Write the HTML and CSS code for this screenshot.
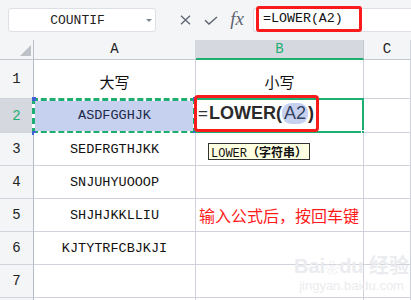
FILE: index.html
```html
<!DOCTYPE html>
<html lang="zh-CN">
    <head>
        <meta charset="UTF-8" />
        <meta name="viewport" content="width=device-width, initial-scale=1.0" />
        <title>LOWER</title>
        <link rel="stylesheet" href="styles.css">
    </head>
    <body>
        <!-- 편집줄 -->
        <div class="toolbar">
            <div class="namebox">
                <span class="nb_text">COUNTIF</span>
                <span class="caret"></span>
            </div>
            <div class="fx_icons">
                <span class="ic">
                    <svg width="11" height="10" viewBox="0 0 11 10">
                        <path d="M1 0.8L10 9.2M10 0.8L1 9.2" stroke="#5d6470" stroke-width="1.3" fill="none" />
                    </svg>
                </span>
                <span class="ic">
                    <svg width="14" height="9" viewBox="0 0 14 9">
                        <path d="M1 4.2L5 8L13 1" stroke="#5d6470" stroke-width="1.4" fill="none" />
                    </svg>
                </span>
                <span class="ic fx">fx</span>
            </div>
            <div class="formula">
                <span class="mark_bar">=LOWER(A2)</span>
            </div>
        </div>

        <!-- 시트 -->
        <div class="sheet">
            <div class="corner"><span class="tri"></span></div>
            <div class="colhead">A</div>
            <div class="colhead on">B</div>
            <div class="colhead">C</div>

            <div class="rowhead">1</div>
            <div class="cell cn">大写</div>
            <div class="cell cn">小写</div>
            <div class="cell"></div>

            <div class="rowhead on">2</div>
            <div class="cell ref">
                ASDFGGHJK
                <span class="ants"></span>
                <span class="dot d1"></span>
                <span class="dot d2"></span>
                <span class="dot d3"></span>
                <span class="dot d4"></span>
            </div>
            <div class="cell active">
                <span class="mark_cell">
                    <span class="eq">=</span><b>LOWER(</b><span class="arg">A2</span><b>)</b>
                </span>
                <span class="handle"></span>
            </div>
            <div class="cell"></div>

            <div class="rowhead">3</div>
            <div class="cell">SEDFRGTHJKK</div>
            <div class="cell tip_cell">
                <span class="tip">LOWER<b>（字符串）</b></span>
            </div>
            <div class="cell"></div>

            <div class="rowhead">4</div>
            <div class="cell">SNJUHYUOOOP</div>
            <div class="cell"></div>
            <div class="cell"></div>

            <div class="rowhead">5</div>
            <div class="cell">SHJHJKKLLIU</div>
            <div class="cell note">输入公式后，按回车键</div>
            <div class="cell"></div>

            <div class="rowhead">6</div>
            <div class="cell">KJTYTRFCBJKJI</div>
            <div class="cell"></div>
            <div class="cell"></div>

            <div class="rowhead">7</div>
            <div class="cell"></div>
            <div class="cell"></div>
            <div class="cell"></div>

            <!-- 8행은 아래 끝에 조금만 보임 -->
            <div class="rowhead"></div>
            <div class="cell"></div>
            <div class="cell"></div>
            <div class="cell"></div>

            <!-- 워터마크 -->
            <div class="wm">
                <div class="wm_logo">Bai<span class="paw">❀</span>du 经验</div>
                <div class="wm_url">jingyan.baidu.com</div>
            </div>
        </div>
    </body>
</html>
```

FILE: styles.css
```css
* {
    margin: 0px;
    padding: 0px;
    box-sizing: border-box;
}

body {
    width: 411px;
    height: 300px;
    overflow: hidden;
    background-color: #f4f5f7;
    font-family: "Liberation Mono", "Noto Sans CJK SC", monospace;
    color: #111;
}

/* 편집줄 */
.toolbar {
    height: 40px;
    display: flex;
    align-items: center;
    padding-left: 8px;
}

.namebox {
    width: 148px;
    height: 24px;
    background-color: #fff;
    border: 1px solid #dcdfe5;
    border-radius: 3px;
    display: flex;
    align-items: center;
}
.nb_text {
    flex: 1;
    text-align: center;
    font-size: 13px;
    color: #222;
}
.caret {
    width: 0;
    height: 0;
    border-left: 3px solid transparent;
    border-right: 3px solid transparent;
    border-top: 3px solid #80868f;
    margin-right: 3px;
}

.fx_icons {
    display: flex;
    align-items: center;
    padding-left: 16px;
    width: 97px;
}
.ic {
    width: 26px;
    height: 24px;
    display: flex;
    align-items: center;
    justify-content: center;
}
.fx {
    font-family: "Liberation Serif", serif;
    font-style: italic;
    font-size: 19px;
    color: #5d6470;
    padding-bottom: 2px;
}

.formula {
    flex: 1;
    height: 24px;
    background-color: #fff;
    border: 1px solid #dcdfe5;
    border-right: none;
    border-radius: 3px 0 0 3px;
    display: flex;
}
.mark_bar {
    height: 26px;
    margin-top: -3px;
    margin-left: 2px;
    width: 106px;
    border: 3px solid #fa1c1c;
    border-radius: 3px;
    padding-left: 4px;
    font-size: 13.3px;
    line-height: 20px;
    color: #111;
}

/* 시트 */
.sheet {
    position: relative;
    display: grid;
    grid-template-columns: 34px 162px 168px 1fr;
    grid-template-rows: 20px 39px 34px 33px 33px 33px 33px 33px 33px;
}

.corner {
    background-color: #f4f5f7;
    border-right: 1px solid #b7bccb;
    border-bottom: 1px solid #c3c7cf;
    display: flex;
    justify-content: flex-end;
    align-items: flex-end;
    padding: 0 2px 3px 0;
}
.tri {
    width: 0;
    height: 0;
    border-left: 11px solid transparent;
    border-bottom: 11px solid #bdc1c8;
}

.colhead {
    background-color: #f4f5f7;
    border-right: 1px solid #d3d6de;
    border-bottom: 1px solid #c3c7cf;
    font-size: 14px;
    text-align: center;
    line-height: 19px;
    color: #222;
}
.colhead.on {
    background-color: #d5d8de;
    color: #1fae72;
    border-bottom: 2px solid #1fae72;
    border-right-color: #c3c7cf;
}

.rowhead {
    background-color: #f4f5f7;
    border-right: 1px solid #b7bccb;
    border-bottom: 1px solid #d0d3dc;
    font-size: 14px;
    color: #222;
    display: flex;
    align-items: center;
    justify-content: center;
}
.rowhead.on {
    background-color: #d5d8de;
    color: #1fae72;
}

.cell {
    position: relative;
    background-color: #fff;
    border-right: 1px solid #d0d3dc;
    border-bottom: 1px solid #d0d3dc;
    font-size: 13.5px;
    display: flex;
    align-items: center;
    justify-content: center;
    white-space: nowrap;
}
.cell.cn {
    font-family: "Noto Sans CJK SC", sans-serif;
    font-size: 15px;
    padding-top: 4px;
}

/* 참조 셀 A2 */
.cell.ref {
    background-color: #c6d1ef;
    color: #1d2a4b;
}
.ants {
    position: absolute;
    top: -1px;
    left: -2px;
    right: -1px;
    bottom: -2px;
    border: 3px solid #fff;
}
.ants::after {
    content: "";
    position: absolute;
    top: -3px;
    left: -3px;
    right: -3px;
    bottom: -3px;
    border: 3px dashed #1fae72;
}
.dot {
    position: absolute;
    width: 4px;
    height: 4px;
    background-color: #3f63d6;
}
.d1 { top: -2px; left: -2px; }
.d2 { top: -2px; right: -2px; }
.d3 { bottom: -3px; left: -2px; }
.d4 { bottom: -3px; right: -2px; }

/* 활성 셀 B2 */
.cell.active {
    justify-content: flex-start;
    align-items: flex-start;
}
.cell.active::before {
    content: "";
    position: absolute;
    top: -1px;
    left: -1px;
    right: -1px;
    bottom: -1px;
    border: 2px solid #1fae72;
}
.handle {
    position: absolute;
    right: -4px;
    bottom: -4px;
    width: 6px;
    height: 6px;
    background-color: #1fae72;
    border: 1px solid #fff;
}
.mark_cell {
    position: relative;
    z-index: 2;
    margin-top: -4px;
    margin-left: -2px;
    width: 125px;
    height: 37px;
    border: 3px solid #fa1c1c;
    border-radius: 4px;
    display: flex;
    align-items: center;
    padding-left: 1px;
    font-family: "Liberation Sans", sans-serif;
    font-size: 18px;
    color: #2a2a2a;
}
.mark_cell b {
    font-weight: bold;
}
.eq {
    font-weight: normal;
    font-size: 17px;
    margin-right: 1px;
    color: #333;
}
.arg {
    background-color: #c6d1ef;
    border-radius: 9px;
    padding: 0 2px;
    color: #34425f;
}

/* 함수 도움말 */
.tip_cell {
    justify-content: flex-start;
    align-items: flex-start;
}
.tip {
    margin: 10px 0 0 12px;
    height: 17px;
    padding: 0 2px;
    background-color: #ffffe1;
    border: 1px solid #333;
    font-size: 12px;
    line-height: 15px;
    color: #111;
}
.tip b {
    font-family: "Noto Sans CJK SC", sans-serif;
    font-weight: bold;
}

.note {
    justify-content: flex-start;
    padding-left: 3px;
    font-family: "Noto Sans CJK SC", sans-serif;
    font-size: 16px;
    color: #ff1a1a;
}

/* 워터마크 */
.wm {
    position: absolute;
    left: 294px;
    top: 215px;
    color: #ebecef;
    font-family: "Liberation Sans", "Noto Sans CJK SC", sans-serif;
    text-align: center;
}
.wm_logo {
    font-size: 20px;
    font-weight: bold;
    line-height: 22px;
}
.paw {
    font-size: 14px;
}
.wm_url {
    font-size: 13px;
    line-height: 14px;
}
```
